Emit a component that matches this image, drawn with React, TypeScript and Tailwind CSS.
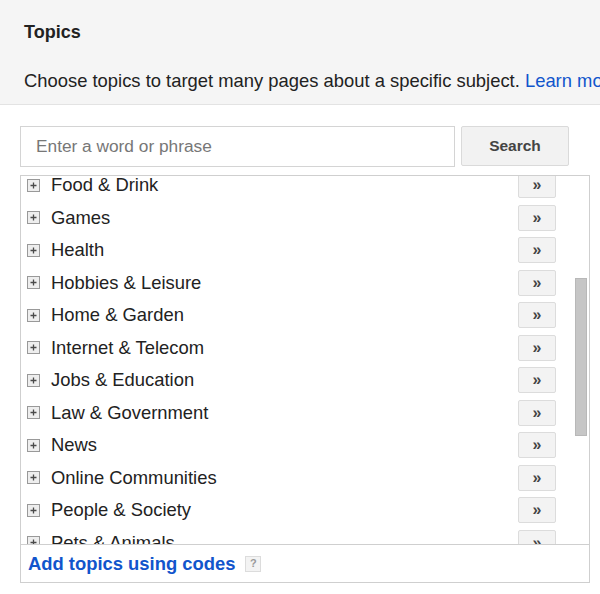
import React from 'react';

const topics = [
  'Food & Drink',
  'Games',
  'Health',
  'Hobbies & Leisure',
  'Home & Garden',
  'Internet & Telecom',
  'Jobs & Education',
  'Law & Government',
  'News',
  'Online Communities',
  'People & Society',
  'Pets & Animals',
];

function PlusBox() {
  return (
    <svg width="13" height="13" viewBox="0 0 13 13" className="shrink-0">
      <rect x="0.5" y="0.5" width="12" height="12" fill="#eeeeee" stroke="#999" />
      <path d="M3.5 6.5h6M6.5 3.5v6" stroke="#4a4a4a" strokeWidth="1.3" />
    </svg>
  );
}

export default function App() {
  return (
    <div className="w-[600px] h-[594px] overflow-hidden bg-white font-['Liberation_Sans',Arial,sans-serif] text-[#222]">
      <div className="h-[105px] bg-[#f5f5f5] border-b border-[#e3e3e3] pl-6 whitespace-nowrap overflow-hidden">
        <div className="pt-[22px] text-[18px] font-bold leading-5">Topics</div>
        <div className="mt-[27px] text-[18.4px] leading-6">
          Choose topics to target many pages about a specific subject.{' '}
          <span className="text-[#1155cc]">Learn more</span>
        </div>
      </div>

      <div className="px-5 pt-[21px]">
        <div className="flex items-start gap-[6px]">
          <input
            placeholder="Enter a word or phrase"
            className="w-[435px] h-[41px] border border-[#d4d4d4] px-[15px] text-[17.3px] placeholder:text-[#777] outline-none"
          />
          <button className="w-[108px] h-[40px] rounded-[2px] border border-[#dadada] bg-[#f2f2f2] text-[15.5px] font-bold text-[#444]">
            Search
          </button>
        </div>

        <div className="relative mt-[8px] w-[570px] h-[408px] border border-[#cfcfcf] flex flex-col">
          <div className="relative h-[368px] overflow-hidden">
            <div className="-mt-[7px]">
              {topics.map((t) => (
                <div key={t} className="h-[32.5px] flex items-center pl-[6px]">
                  <PlusBox />
                  <span className="ml-[11px] text-[18.4px]">{t}</span>
                  <button className="ml-auto mr-[33px] w-[38px] h-[26px] rounded-[2px] border border-[#dcdcdc] bg-[#f3f3f3] text-[16px] font-bold text-[#444] leading-none">
                    »
                  </button>
                </div>
              ))}
            </div>
            <div className="absolute left-[554px] top-[102px] w-[12px] h-[158px] bg-[#c6c6c6] border border-[#b8b8b8]" />
          </div>
          <div className="flex-1 border-t border-[#cfcfcf] flex items-center pl-[7px]">
            <span className="text-[18.4px] font-bold text-[#1155cc]">Add topics using codes</span>
            <span className="ml-[10px] w-[16px] h-[16px] border border-[#dcdcdc] bg-[#f3f3f3] text-[11px] font-bold text-[#9a9a9a] flex items-center justify-center">
              ?
            </span>
          </div>
        </div>
      </div>
    </div>
  );
}
